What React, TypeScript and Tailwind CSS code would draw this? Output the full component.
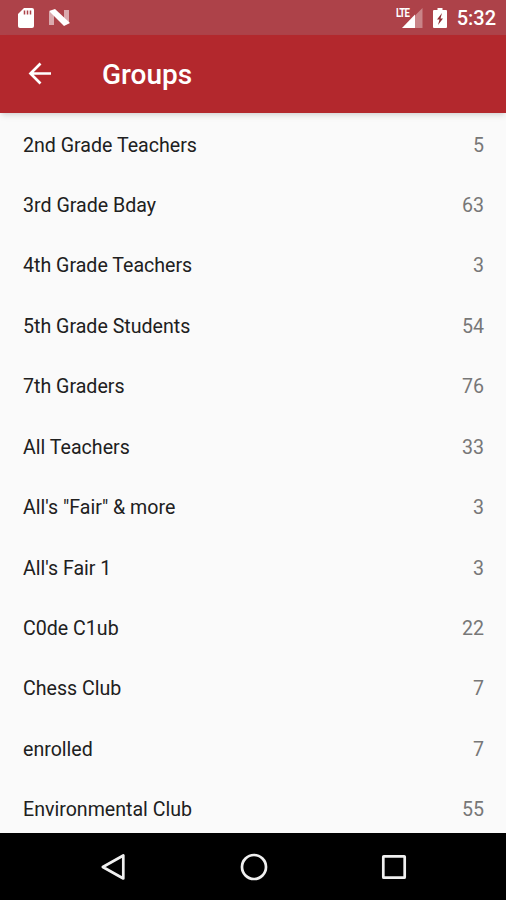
const groups = [
  { name: "2nd Grade Teachers", count: 5 },
  { name: "3rd Grade Bday", count: 63 },
  { name: "4th Grade Teachers", count: 3 },
  { name: "5th Grade Students", count: 54 },
  { name: "7th Graders", count: 76 },
  { name: "All Teachers", count: 33 },
  { name: "All's \"Fair\" & more", count: 3 },
  { name: "All's Fair 1", count: 3 },
  { name: "C0de C1ub", count: 22 },
  { name: "Chess Club", count: 7 },
  { name: "enrolled", count: 7 },
  { name: "Environmental Club", count: 55 },
];

function StatusBar() {
  return (
    <div className="flex h-[35px] shrink-0 items-center bg-[#ad4249] pr-[10px] pl-[18px] text-white">
      <svg className="h-5 w-4" viewBox="0 0 16 20" aria-hidden="true">
        <path d="M6 0h8a2 2 0 0 1 2 2v16a2 2 0 0 1-2 2H2a2 2 0 0 1-2-2V6z" fill="currentColor" />
        <path d="M6.500 2.500v4M9.500 2.500v4M12.500 2.500v4" stroke="#ad4249" strokeWidth="1.500" />
      </svg>
      <svg className="ml-[15px] h-[17px] w-[21px]" viewBox="0 0 21 17" aria-hidden="true">
        <path d="M0 3v13h5V2zM20 1v13l-5 1V1z" fill="currentColor" opacity=".55" />
        <path d="M0 2 6 0 21 14 15 17z" fill="currentColor" />
      </svg>
      <div className="flex-1" />
      <div className="relative h-5 w-[27px]">
        <svg className="h-5 w-[27px]" viewBox="0 0 27 20" aria-hidden="true">
          <path d="M26.500 0v20H19V7.500z" fill="currentColor" opacity=".35" />
          <path d="M19 6.500V20H6z" fill="currentColor" />
        </svg>
        <span className="absolute top-0 left-0 origin-left scale-x-80 bg-[#ad4249] text-[12px] leading-[10px] font-bold tracking-[-1px]">
          LTE
        </span>
      </div>
      <svg className="ml-[10px] h-5 w-[14px]" viewBox="0 0 14 20" aria-hidden="true">
        <path d="M4.500 0h5v2H13a1 1 0 0 1 1 1v16a1 1 0 0 1-1 1H1a1 1 0 0 1-1-1V3a1 1 0 0 1 1-1h3.500z" fill="currentColor" />
        <path d="M9 5 4 11.500h2.500L5 17l5-6.500H7.500z" fill="#8f2c33" />
      </svg>
      <span className="ml-[10px] text-[20px] leading-none font-medium">5:32</span>
    </div>
  );
}

function NavBar() {
  return (
    <nav className="flex h-[67px] shrink-0 items-center justify-between bg-black pr-[98px] pl-[99px] text-[#f0f0f0]">
      <svg className="size-7" viewBox="0 0 28 28" fill="none" stroke="currentColor" strokeWidth="2.700" aria-hidden="true">
        <path d="M24.300 2.500v23L3.800 14z" strokeLinejoin="round" />
      </svg>
      <svg className="size-7" viewBox="0 0 28 28" fill="none" stroke="currentColor" strokeWidth="2.700" aria-hidden="true">
        <circle cx="14" cy="14" r="12" />
      </svg>
      <svg className="size-7" viewBox="0 0 28 28" fill="none" stroke="currentColor" strokeWidth="2.700" aria-hidden="true">
        <rect x="3.300" y="3.300" width="21.400" height="21.400" rx=".5" />
      </svg>
    </nav>
  );
}

export default function App() {
  return (
    <div className="flex h-[900px] w-[506px] flex-col overflow-hidden bg-[#fafafa] font-[Roboto,sans-serif]">
      <StatusBar />
      <header className="z-10 flex h-[78px] shrink-0 items-center bg-[#b3282d] pl-7 text-white shadow-md">
        <svg className="size-6" viewBox="0 0 24 24" aria-hidden="true">
          <path d="M23 11.500H2.500M12.500 1.500l-10 10 10 10" fill="none" stroke="currentColor" strokeWidth="2.700" />
        </svg>
        <h1 className="mt-0.5 ml-[50px] text-[28px] font-medium">Groups</h1>
      </header>
      <ul className="h-[720px] shrink-0 overflow-hidden pt-0.5">
        {groups.map((group) => (
          <li key={group.name} className="flex h-[60.450px] items-center justify-between pr-[22px] pl-[23px] text-[19.600px]">
            <span className="text-[#202020]">{group.name}</span>
            <span className="text-[#777]">{group.count}</span>
          </li>
        ))}
      </ul>
      <NavBar />
    </div>
  );
}
